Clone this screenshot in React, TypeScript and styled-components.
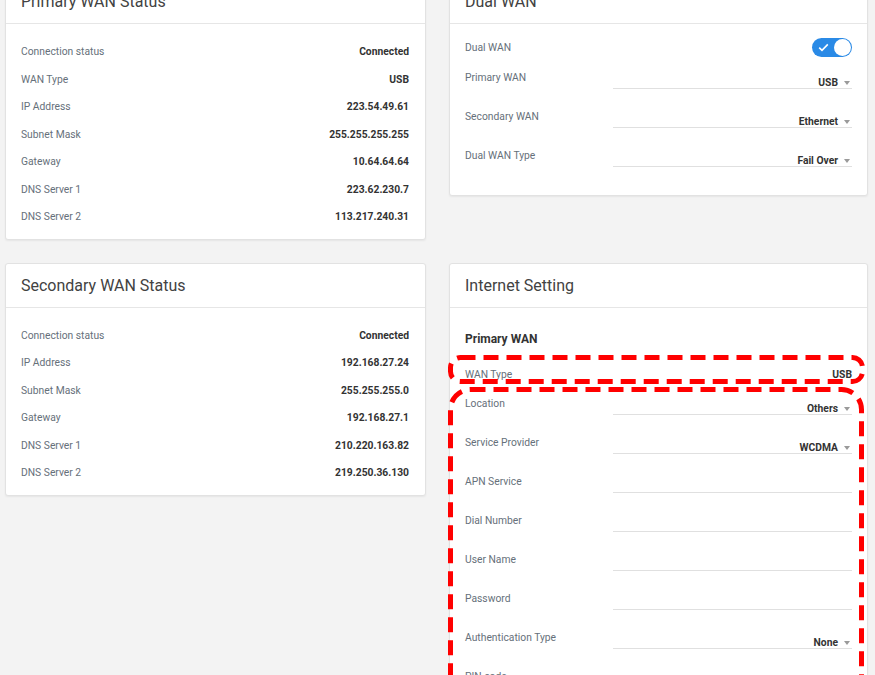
import React from "react";
import styled, { createGlobalStyle } from "styled-components";

const Global = createGlobalStyle`
  html, body { margin: 0; padding: 0; background: #f3f3f3; }
  body { font-family: Roboto, "Liberation Sans", Arial, sans-serif; overflow: hidden; }
  * { box-sizing: border-box; }
`;

const Page = styled.div`
  display: grid;
  grid-template-columns: 421px 419px;
  column-gap: 23px;
  row-gap: 23px;
  align-items: start;
  padding: 0 7px 40px 5px;
  margin-top: -21px;
`;

const Card = styled.section`
  background: #fff;
  border: 1px solid #e2e2e2;
  border-radius: 3px;
  box-shadow: 0 1px 2px rgba(0, 0, 0, 0.06);
`;

const CardHeader = styled.header`
  height: 44px;
  display: flex;
  align-items: center;
  padding: 0 15px;
  border-bottom: 1px solid #e6e6e6;
  font-size: 16px;
  color: #424242;
`;

const InfoBody = styled.div`
  padding: 14px 16px 8px 15px;
`;

const InfoRow = styled.div`
  height: 27.5px;
  display: flex;
  align-items: center;
  justify-content: space-between;
  font-size: 10.3px;
`;

const Label = styled.span`
  color: #66707a;
`;

const Value = styled.span`
  color: #333;
  font-weight: 700;
`;

const FormBody = styled.div<{ $top: number; $bottom: number }>`
  padding: ${(p) => p.$top}px 15px ${(p) => p.$bottom}px 15px;
`;

const ToggleRow = styled.div`
  height: 22px;
  display: flex;
  align-items: center;
  justify-content: space-between;
  font-size: 10.3px;
`;

const Toggle = styled.div`
  width: 40px;
  height: 19px;
  border-radius: 10px;
  background: #2a8ae6;
  position: relative;
  display: flex;
  align-items: center;
  padding-left: 6px;
`;

const Knob = styled.span`
  position: absolute;
  right: 1px;
  top: 1px;
  width: 17px;
  height: 17px;
  border-radius: 50%;
  background: #fff;
`;

const SelectRow = styled.div`
  height: 39px;
  display: grid;
  grid-template-columns: 148px 1fr;
  align-items: start;
  font-size: 10.3px;
`;

const RowLabel = styled.span`
  color: #66707a;
  margin-top: 13px;
  line-height: 14px;
`;

const Field = styled.div`
  margin-top: 15px;
  height: 16px;
  border-bottom: 1px solid #e0e0e0;
  display: flex;
  align-items: flex-end;
  justify-content: flex-end;
  gap: 6px;
  padding-right: 2px;
  line-height: 10px;
`;

const Caret = styled.span`
  width: 0;
  height: 0;
  border-left: 3.5px solid transparent;
  border-right: 3.5px solid transparent;
  border-top: 4px solid #9a9a9a;
  margin-bottom: 3px;
`;

const SubHeading = styled.div`
  font-size: 12px;
  font-weight: 700;
  color: #333;
  line-height: 16px;
  margin-bottom: 18px;
`;

const Highlight = styled.div`
  position: relative;
`;

const DashFrame = styled.svg<{ $top: number; $right: number }>`
  position: absolute;
  left: -17px;
  right: ${(p) => p.$right}px;
  top: ${(p) => p.$top}px;
  bottom: 0;
  width: calc(100% + 17px - ${(p) => p.$right}px);
  height: calc(100% - ${(p) => p.$top}px);
  overflow: visible;
  pointer-events: none;
`;

const DashRect = styled.rect`
  x: 2.5px;
  y: 2.5px;
  width: calc(100% - 5px);
  height: calc(100% - 5px);
  fill: none;
  stroke: #ff0000;
  stroke-width: 5px;
  stroke-dasharray: 15 8;
`;

const Dashed = ({ top, right, radius }: { top: number; right: number; radius: number }) => (
  <DashFrame $top={top} $right={right}>
    <DashRect rx={radius} ry={radius} />
  </DashFrame>
);

const PlainRow = styled.div`
  height: 19px;
  display: flex;
  align-items: center;
  justify-content: space-between;
  font-size: 10.3px;
`;

type Pair = [string, string];

const primary: Pair[] = [
  ["Connection status", "Connected"],
  ["WAN Type", "USB"],
  ["IP Address", "223.54.49.61"],
  ["Subnet Mask", "255.255.255.255"],
  ["Gateway", "10.64.64.64"],
  ["DNS Server 1", "223.62.230.7"],
  ["DNS Server 2", "113.217.240.31"],
];

const secondary: Pair[] = [
  ["Connection status", "Connected"],
  ["IP Address", "192.168.27.24"],
  ["Subnet Mask", "255.255.255.0"],
  ["Gateway", "192.168.27.1"],
  ["DNS Server 1", "210.220.163.82"],
  ["DNS Server 2", "219.250.36.130"],
];

const InfoCard = ({ title, rows }: { title: string; rows: Pair[] }) => (
  <Card>
    <CardHeader>{title}</CardHeader>
    <InfoBody>
      {rows.map(([l, v]) => (
        <InfoRow key={l}>
          <Label>{l}</Label>
          <Value>{v}</Value>
        </InfoRow>
      ))}
    </InfoBody>
  </Card>
);

const Select = ({ label, value }: { label: string; value?: string }) => (
  <SelectRow>
    <RowLabel>{label}</RowLabel>
    <Field>
      {value && (
        <>
          <Value>{value}</Value>
          <Caret />
        </>
      )}
    </Field>
  </SelectRow>
);

export default function App() {
  return (
    <>
      <Global />
      <Page>
        <InfoCard title="Primary WAN Status" rows={primary} />
        <Card>
          <CardHeader>Dual WAN</CardHeader>
          <FormBody $top={12} $bottom={20}>
            <ToggleRow>
              <Label>Dual WAN</Label>
              <Toggle>
                <svg width="11" height="9" viewBox="0 0 11 9">
                  <path d="M1.2 4.6 L4 7.3 L9.8 1.4" fill="none" stroke="#fff" strokeWidth="1.6" />
                </svg>
                <Knob />
              </Toggle>
            </ToggleRow>
            <Select label="Primary WAN" value="USB" />
            <Select label="Secondary WAN" value="Ethernet" />
            <Select label="Dual WAN Type" value="Fail Over" />
          </FormBody>
        </Card>
        <InfoCard title="Secondary WAN Status" rows={secondary} />
        <Card>
          <CardHeader>Internet Setting</CardHeader>
          <FormBody $top={23} $bottom={20}>
            <SubHeading>Primary WAN</SubHeading>
            <Highlight>
              <PlainRow>
                <Label>WAN Type</Label>
                <Value>USB</Value>
              </PlainRow>
              <Dashed top={-10} right={-13} radius={10} />
            </Highlight>
            <Highlight>
              <Select label="Location" value="Others" />
              <Select label="Service Provider" value="WCDMA" />
              <Select label="APN Service" />
              <Select label="Dial Number" />
              <Select label="User Name" />
              <Select label="Password" />
              <Select label="Authentication Type" value="None" />
              <Select label="PIN code" />
              <Select label="MTU" />
              <Dashed top={3} right={-12} radius={20} />
            </Highlight>
          </FormBody>
        </Card>
      </Page>
    </>
  );
}
